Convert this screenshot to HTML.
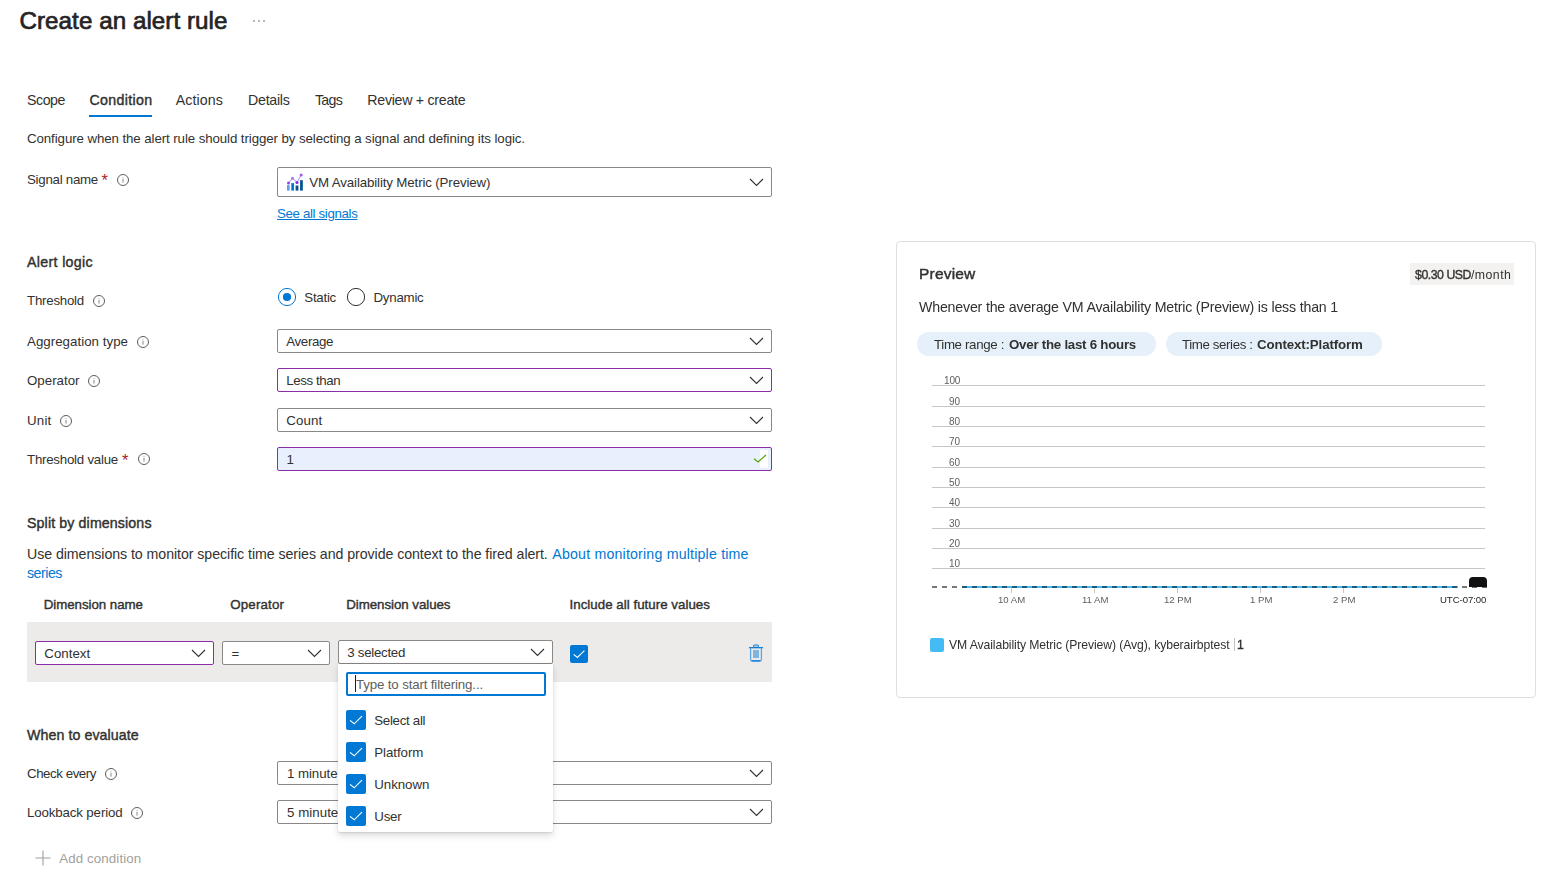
<!DOCTYPE html>
<html><head><meta charset="utf-8"><style>
html,body{margin:0;padding:0;background:#fff;width:1560px;height:887px;overflow:hidden;}
body{position:relative;font-family:"Liberation Sans",sans-serif;}
</style></head><body>
<div style="position:absolute;left:19.50px;top:11.00px;line-height:20px;font-size:24.2px;font-weight:400;color:#242424;letter-spacing:0.048px;white-space:nowrap;-webkit-text-stroke:0.70px #242424;">Create an alert rule</div>
<svg style="position:absolute;left:252px;top:19px" width="14" height="4" viewBox="0 0 14 4"><circle cx="2" cy="2" r="0.8" fill="#605e5c"/><circle cx="7" cy="2" r="0.8" fill="#605e5c"/><circle cx="12" cy="2" r="0.8" fill="#605e5c"/></svg>
<div style="position:absolute;left:27.00px;top:90.00px;line-height:20px;font-size:14.2px;font-weight:400;color:#323130;letter-spacing:-0.447px;white-space:nowrap;">Scope</div>
<div style="position:absolute;left:89.50px;top:90.00px;line-height:20px;font-size:14.2px;font-weight:400;color:#323130;letter-spacing:0.339px;white-space:nowrap;-webkit-text-stroke:0.41px #323130;">Condition</div>
<div style="position:absolute;left:175.80px;top:90.00px;line-height:20px;font-size:14.2px;font-weight:400;color:#323130;letter-spacing:0.067px;white-space:nowrap;">Actions</div>
<div style="position:absolute;left:248.00px;top:90.00px;line-height:20px;font-size:14.2px;font-weight:400;color:#323130;letter-spacing:-0.254px;white-space:nowrap;">Details</div>
<div style="position:absolute;left:315.00px;top:90.00px;line-height:20px;font-size:14.2px;font-weight:400;color:#323130;letter-spacing:-0.742px;white-space:nowrap;">Tags</div>
<div style="position:absolute;left:367.30px;top:90.00px;line-height:20px;font-size:14.2px;font-weight:400;color:#323130;letter-spacing:-0.275px;white-space:nowrap;">Review + create</div>
<div style="position:absolute;left:89px;top:115px;width:63px;height:2px;background:#0078d4;"></div>
<div style="position:absolute;left:27.00px;top:129.00px;line-height:20px;font-size:13.3px;font-weight:400;color:#323130;letter-spacing:-0.093px;white-space:nowrap;">Configure when the alert rule should trigger by selecting a signal and defining its logic.</div>
<div style="position:absolute;left:27.00px;top:170.00px;line-height:20px;font-size:13.3px;font-weight:400;color:#323130;letter-spacing:-0.266px;white-space:nowrap;">Signal name</div>
<div style="position:absolute;left:101.50px;top:170.00px;line-height:20px;font-size:16.5px;font-weight:400;color:#a4262c;letter-spacing:0.000px;white-space:nowrap;">*</div>
<svg style="position:absolute;left:116px;top:173px" width="14" height="14" viewBox="0 0 14 14"><circle cx="7" cy="7" r="5.5" fill="none" stroke="#605e5c" stroke-width="1"/><rect x="6.5" y="6" width="1" height="3.6" fill="#8a8886"/><rect x="6.5" y="4.2" width="1" height="1" fill="#a19f9d"/></svg>
<div style="position:absolute;left:277px;top:167px;width:495px;height:30px;box-sizing:border-box;border:1px solid #8a8886;background:#fff;border-radius:2px;"></div>
<svg style="position:absolute;left:286px;top:172px" width="18" height="20" viewBox="0 0 18 20">
<rect x="1" y="13.1" width="2.7" height="5.5" fill="#5ea0ef"/>
<rect x="5.3" y="11.1" width="2.7" height="7.5" fill="#0078d4"/>
<rect x="9.6" y="13.5" width="2.8" height="5.1" fill="#0a4f96"/>
<rect x="14.1" y="8.2" width="2.7" height="10.4" fill="#004e8c"/>
<polyline points="2.5,11.1 6.5,6.2 11,10.4 15.2,2.9" fill="none" stroke="#a67af4" stroke-width="0.9"/>
<circle cx="2.5" cy="11.1" r="1.5" fill="#8c46e6"/><circle cx="6.5" cy="6.2" r="1.5" fill="#a67af4"/>
<circle cx="11" cy="10.4" r="1.5" fill="#7b2fe0"/><circle cx="15.2" cy="2.9" r="1.5" fill="#9a5cf0"/>
</svg>
<div style="position:absolute;left:309.30px;top:173.00px;line-height:20px;font-size:13.3px;font-weight:400;color:#323130;letter-spacing:-0.132px;white-space:nowrap;">VM Availability Metric (Preview)</div>
<svg style="position:absolute;left:749.0px;top:178.05px" width="15" height="8.5" viewBox="0 0 15 8.5"><path d="M1 1 L7.5 7.5 L14 1" fill="none" stroke="#323130" stroke-width="1.1"/></svg>
<div style="position:absolute;left:277.00px;top:204.00px;line-height:20px;font-size:13.3px;font-weight:400;color:#0078d4;letter-spacing:-0.350px;white-space:nowrap;text-decoration:underline;text-underline-offset:1px;">See all signals</div>
<div style="position:absolute;left:27.00px;top:252.00px;line-height:20px;font-size:14.2px;font-weight:400;color:#323130;letter-spacing:0.337px;white-space:nowrap;-webkit-text-stroke:0.41px #323130;">Alert logic</div>
<div style="position:absolute;left:27.00px;top:291.00px;line-height:20px;font-size:13.3px;font-weight:400;color:#323130;letter-spacing:-0.238px;white-space:nowrap;">Threshold</div>
<svg style="position:absolute;left:92px;top:293.8px" width="14" height="14" viewBox="0 0 14 14"><circle cx="7" cy="7" r="5.5" fill="none" stroke="#605e5c" stroke-width="1"/><rect x="6.5" y="6" width="1" height="3.6" fill="#8a8886"/><rect x="6.5" y="4.2" width="1" height="1" fill="#a19f9d"/></svg>
<svg style="position:absolute;left:277px;top:287px" width="20" height="20" viewBox="0 0 20 20"><circle cx="10" cy="10" r="8.6" fill="#fff" stroke="#0078d4" stroke-width="1"/><circle cx="10" cy="10" r="4.1" fill="#0078d4"/></svg>
<div style="position:absolute;left:304.30px;top:288.00px;line-height:20px;font-size:13.3px;font-weight:400;color:#323130;letter-spacing:-0.261px;white-space:nowrap;">Static</div>
<svg style="position:absolute;left:346px;top:287px" width="20" height="20" viewBox="0 0 20 20"><circle cx="10" cy="10" r="8.6" fill="#fff" stroke="#323130" stroke-width="1"/></svg>
<div style="position:absolute;left:373.50px;top:288.00px;line-height:20px;font-size:13.3px;font-weight:400;color:#323130;letter-spacing:-0.248px;white-space:nowrap;">Dynamic</div>
<div style="position:absolute;left:27.00px;top:332.00px;line-height:20px;font-size:13.3px;font-weight:400;color:#323130;letter-spacing:0.028px;white-space:nowrap;">Aggregation type</div>
<svg style="position:absolute;left:136px;top:334.7px" width="14" height="14" viewBox="0 0 14 14"><circle cx="7" cy="7" r="5.5" fill="none" stroke="#605e5c" stroke-width="1"/><rect x="6.5" y="6" width="1" height="3.6" fill="#8a8886"/><rect x="6.5" y="4.2" width="1" height="1" fill="#a19f9d"/></svg>
<div style="position:absolute;left:277px;top:329px;width:495px;height:24px;box-sizing:border-box;border:1px solid #8a8886;background:#fff;border-radius:2px;"></div>
<div style="position:absolute;left:286.20px;top:332.00px;line-height:20px;font-size:13.3px;font-weight:400;color:#323130;letter-spacing:-0.328px;white-space:nowrap;">Average</div>
<svg style="position:absolute;left:749.0px;top:336.55px" width="15" height="8.5" viewBox="0 0 15 8.5"><path d="M1 1 L7.5 7.5 L14 1" fill="none" stroke="#323130" stroke-width="1.1"/></svg>
<div style="position:absolute;left:27.00px;top:371.00px;line-height:20px;font-size:13.3px;font-weight:400;color:#323130;letter-spacing:0.002px;white-space:nowrap;">Operator</div>
<svg style="position:absolute;left:87px;top:373.7px" width="14" height="14" viewBox="0 0 14 14"><circle cx="7" cy="7" r="5.5" fill="none" stroke="#605e5c" stroke-width="1"/><rect x="6.5" y="6" width="1" height="3.6" fill="#8a8886"/><rect x="6.5" y="4.2" width="1" height="1" fill="#a19f9d"/></svg>
<div style="position:absolute;left:277px;top:368px;width:495px;height:24px;box-sizing:border-box;border:1px solid #8a2da8;background:#fff;border-radius:2px;"></div>
<div style="position:absolute;left:286.20px;top:371.00px;line-height:20px;font-size:13.3px;font-weight:400;color:#323130;letter-spacing:-0.408px;white-space:nowrap;">Less than</div>
<svg style="position:absolute;left:749.0px;top:375.55px" width="15" height="8.5" viewBox="0 0 15 8.5"><path d="M1 1 L7.5 7.5 L14 1" fill="none" stroke="#323130" stroke-width="1.1"/></svg>
<div style="position:absolute;left:27.00px;top:411.00px;line-height:20px;font-size:13.3px;font-weight:400;color:#323130;letter-spacing:0.211px;white-space:nowrap;">Unit</div>
<svg style="position:absolute;left:59px;top:413.7px" width="14" height="14" viewBox="0 0 14 14"><circle cx="7" cy="7" r="5.5" fill="none" stroke="#605e5c" stroke-width="1"/><rect x="6.5" y="6" width="1" height="3.6" fill="#8a8886"/><rect x="6.5" y="4.2" width="1" height="1" fill="#a19f9d"/></svg>
<div style="position:absolute;left:277px;top:408px;width:495px;height:24px;box-sizing:border-box;border:1px solid #8a8886;background:#fff;border-radius:2px;"></div>
<div style="position:absolute;left:286.20px;top:411.00px;line-height:20px;font-size:13.3px;font-weight:400;color:#323130;letter-spacing:0.103px;white-space:nowrap;">Count</div>
<svg style="position:absolute;left:749.0px;top:415.55px" width="15" height="8.5" viewBox="0 0 15 8.5"><path d="M1 1 L7.5 7.5 L14 1" fill="none" stroke="#323130" stroke-width="1.1"/></svg>
<div style="position:absolute;left:27.00px;top:450.00px;line-height:20px;font-size:13.3px;font-weight:400;color:#323130;letter-spacing:-0.242px;white-space:nowrap;">Threshold value</div>
<div style="position:absolute;left:122.00px;top:450.00px;line-height:20px;font-size:16.5px;font-weight:400;color:#a4262c;letter-spacing:0.000px;white-space:nowrap;">*</div>
<svg style="position:absolute;left:137px;top:452px" width="14" height="14" viewBox="0 0 14 14"><circle cx="7" cy="7" r="5.5" fill="none" stroke="#605e5c" stroke-width="1"/><rect x="6.5" y="6" width="1" height="3.6" fill="#8a8886"/><rect x="6.5" y="4.2" width="1" height="1" fill="#a19f9d"/></svg>
<div style="position:absolute;left:277px;top:447px;width:495px;height:24px;box-sizing:border-box;border:1px solid #8a2da8;background:#e8f0fe;border-radius:2px;"></div>
<div style="position:absolute;left:760px;top:450px;width:8px;height:18px;background:#fff;"></div>
<svg style="position:absolute;left:753px;top:454px" width="14" height="10" viewBox="0 0 14 10"><path d="M1 4.8 L5 8 L13 1" fill="none" stroke="#57a300" stroke-width="1.2"/></svg>
<div style="position:absolute;left:286.50px;top:450.00px;line-height:20px;font-size:13.3px;font-weight:400;color:#323130;letter-spacing:0.000px;white-space:nowrap;">1</div>
<div style="position:absolute;left:27.00px;top:513.00px;line-height:20px;font-size:14.2px;font-weight:400;color:#323130;letter-spacing:0.125px;white-space:nowrap;-webkit-text-stroke:0.41px #323130;">Split by dimensions</div>
<div style="position:absolute;left:27.00px;top:544.00px;line-height:20px;font-size:14.2px;font-weight:400;color:#323130;letter-spacing:-0.061px;white-space:nowrap;">Use dimensions to monitor specific time series and provide context to the fired alert.</div>
<div style="position:absolute;left:552.30px;top:544.00px;line-height:20px;font-size:14.2px;font-weight:400;color:#0078d4;letter-spacing:0.185px;white-space:nowrap;">About monitoring multiple time</div>
<div style="position:absolute;left:27.00px;top:563.00px;line-height:20px;font-size:14.2px;font-weight:400;color:#0078d4;letter-spacing:-0.477px;white-space:nowrap;">series</div>
<div style="position:absolute;left:43.70px;top:595.00px;line-height:20px;font-size:13.3px;font-weight:400;color:#323130;letter-spacing:-0.034px;white-space:nowrap;-webkit-text-stroke:0.39px #323130;">Dimension name</div>
<div style="position:absolute;left:230.20px;top:595.00px;line-height:20px;font-size:13.3px;font-weight:400;color:#323130;letter-spacing:0.189px;white-space:nowrap;-webkit-text-stroke:0.39px #323130;">Operator</div>
<div style="position:absolute;left:346.20px;top:595.00px;line-height:20px;font-size:13.3px;font-weight:400;color:#323130;letter-spacing:-0.041px;white-space:nowrap;-webkit-text-stroke:0.39px #323130;">Dimension values</div>
<div style="position:absolute;left:569.50px;top:595.00px;line-height:20px;font-size:13.3px;font-weight:400;color:#323130;letter-spacing:0.028px;white-space:nowrap;-webkit-text-stroke:0.39px #323130;">Include all future values</div>
<div style="position:absolute;left:27px;top:622px;width:745px;height:60px;background:#edebe9;"></div>
<div style="position:absolute;left:35px;top:641px;width:179px;height:24px;box-sizing:border-box;border:1px solid #8a2da8;background:#fff;border-radius:2px;"></div>
<div style="position:absolute;left:44.30px;top:644.00px;line-height:20px;font-size:13.3px;font-weight:400;color:#323130;letter-spacing:0.000px;white-space:nowrap;">Context</div>
<svg style="position:absolute;left:191.0px;top:649.25px" width="15" height="8.5" viewBox="0 0 15 8.5"><path d="M1 1 L7.5 7.5 L14 1" fill="none" stroke="#323130" stroke-width="1.1"/></svg>
<div style="position:absolute;left:222px;top:641px;width:108px;height:24px;box-sizing:border-box;border:1px solid #8a8886;background:#fff;border-radius:2px;"></div>
<div style="position:absolute;left:231.50px;top:644.00px;line-height:20px;font-size:13.3px;font-weight:400;color:#323130;letter-spacing:0.000px;white-space:nowrap;">=</div>
<svg style="position:absolute;left:307.0px;top:649.25px" width="15" height="8.5" viewBox="0 0 15 8.5"><path d="M1 1 L7.5 7.5 L14 1" fill="none" stroke="#323130" stroke-width="1.1"/></svg>
<div style="position:absolute;left:338px;top:640px;width:215px;height:24px;box-sizing:border-box;border:1px solid #8a8886;background:#fff;border-radius:2px;"></div>
<div style="position:absolute;left:347.30px;top:643.00px;line-height:20px;font-size:13.3px;font-weight:400;color:#323130;letter-spacing:-0.292px;white-space:nowrap;">3 selected</div>
<svg style="position:absolute;left:530.0px;top:648.25px" width="15" height="8.5" viewBox="0 0 15 8.5"><path d="M1 1 L7.5 7.5 L14 1" fill="none" stroke="#323130" stroke-width="1.1"/></svg>
<svg style="position:absolute;left:570px;top:645px" width="18" height="18" viewBox="0 0 18 18"><rect x="0" y="0" width="18" height="18" rx="2" fill="#0078d4"/><path d="M3.6 9.36 L7.38 12.419999999999998 L14.4 5.58" fill="none" stroke="#fff" stroke-width="1.1"/></svg>
<svg style="position:absolute;left:748px;top:643px" width="16" height="20" viewBox="0 0 16 20">
<rect x="5.5" y="2" width="5" height="2.2" rx="1" fill="none" stroke="#0078d4" stroke-width="1"/>
<rect x="1" y="4.1" width="14" height="1.2" fill="#0078d4"/>
<path d="M2.6 5 V16.5 Q2.6 18 4 18 H12 Q13.4 18 13.4 16.5 V5" fill="none" stroke="#5ea6e6" stroke-width="1.3"/><rect x="3.5" y="17.3" width="9" height="1.1" fill="#0078d4"/>
<rect x="5" y="7" width="6" height="8" fill="#7fb4e3"/>
</svg>
<div style="position:absolute;left:27.00px;top:725.00px;line-height:20px;font-size:14.2px;font-weight:400;color:#323130;letter-spacing:0.080px;white-space:nowrap;-webkit-text-stroke:0.41px #323130;">When to evaluate</div>
<div style="position:absolute;left:27.00px;top:764.00px;line-height:20px;font-size:13.3px;font-weight:400;color:#323130;letter-spacing:-0.446px;white-space:nowrap;">Check every</div>
<svg style="position:absolute;left:104px;top:766.8px" width="14" height="14" viewBox="0 0 14 14"><circle cx="7" cy="7" r="5.5" fill="none" stroke="#605e5c" stroke-width="1"/><rect x="6.5" y="6" width="1" height="3.6" fill="#8a8886"/><rect x="6.5" y="4.2" width="1" height="1" fill="#a19f9d"/></svg>
<div style="position:absolute;left:277px;top:761px;width:495px;height:24px;box-sizing:border-box;border:1px solid #8a8886;background:#fff;border-radius:2px;"></div>
<div style="position:absolute;left:287.00px;top:764.00px;line-height:20px;font-size:13.3px;font-weight:400;color:#323130;letter-spacing:-0.062px;white-space:nowrap;">1 minute</div>
<svg style="position:absolute;left:749.0px;top:768.75px" width="15" height="8.5" viewBox="0 0 15 8.5"><path d="M1 1 L7.5 7.5 L14 1" fill="none" stroke="#323130" stroke-width="1.1"/></svg>
<div style="position:absolute;left:27.00px;top:803.00px;line-height:20px;font-size:13.3px;font-weight:400;color:#323130;letter-spacing:-0.139px;white-space:nowrap;">Lookback period</div>
<svg style="position:absolute;left:130px;top:805.8px" width="14" height="14" viewBox="0 0 14 14"><circle cx="7" cy="7" r="5.5" fill="none" stroke="#605e5c" stroke-width="1"/><rect x="6.5" y="6" width="1" height="3.6" fill="#8a8886"/><rect x="6.5" y="4.2" width="1" height="1" fill="#a19f9d"/></svg>
<div style="position:absolute;left:277px;top:800px;width:495px;height:24px;box-sizing:border-box;border:1px solid #8a8886;background:#fff;border-radius:2px;"></div>
<div style="position:absolute;left:287.00px;top:803.00px;line-height:20px;font-size:13.3px;font-weight:400;color:#323130;letter-spacing:0.038px;white-space:nowrap;">5 minutes</div>
<svg style="position:absolute;left:749.0px;top:807.75px" width="15" height="8.5" viewBox="0 0 15 8.5"><path d="M1 1 L7.5 7.5 L14 1" fill="none" stroke="#323130" stroke-width="1.1"/></svg>
<svg style="position:absolute;left:35px;top:850px" width="16" height="16" viewBox="0 0 16 16"><path d="M8 0.5 V15.5 M0.5 8 H15.5" stroke="#a19f9d" stroke-width="1.1"/></svg>
<div style="position:absolute;left:59.30px;top:849.00px;line-height:20px;font-size:13.3px;font-weight:400;color:#a19f9d;letter-spacing:0.108px;white-space:nowrap;">Add condition</div>
<div style="position:absolute;left:338px;top:664px;width:215px;height:168px;background:#fff;box-shadow:0 3.2px 7.2px rgba(0,0,0,0.13),0 0.6px 1.8px rgba(0,0,0,0.11);border-radius:0 0 2px 2px"></div>
<div style="position:absolute;left:346px;top:672px;width:200px;height:24px;box-sizing:border-box;border:2px solid #0078d4;background:#fff;border-radius:2px;"></div>
<div style="position:absolute;left:355px;top:675px;width:1px;height:17px;background:#201f1e;"></div>
<div style="position:absolute;left:356.00px;top:675.00px;line-height:20px;font-size:13.3px;font-weight:400;color:#605e5c;letter-spacing:-0.147px;white-space:nowrap;">Type to start filtering...</div>
<svg style="position:absolute;left:346px;top:710px" width="20" height="20" viewBox="0 0 20 20"><rect x="0" y="0" width="20" height="20" rx="2" fill="#0078d4"/><path d="M4.0 10.4 L8.2 13.799999999999999 L16.0 6.2" fill="none" stroke="#fff" stroke-width="1.1"/></svg>
<div style="position:absolute;left:374.30px;top:711.00px;line-height:20px;font-size:13.3px;font-weight:400;color:#323130;letter-spacing:-0.297px;white-space:nowrap;">Select all</div>
<svg style="position:absolute;left:346px;top:742px" width="20" height="20" viewBox="0 0 20 20"><rect x="0" y="0" width="20" height="20" rx="2" fill="#0078d4"/><path d="M4.0 10.4 L8.2 13.799999999999999 L16.0 6.2" fill="none" stroke="#fff" stroke-width="1.1"/></svg>
<div style="position:absolute;left:374.30px;top:743.00px;line-height:20px;font-size:13.3px;font-weight:400;color:#323130;letter-spacing:-0.064px;white-space:nowrap;">Platform</div>
<svg style="position:absolute;left:346px;top:774px" width="20" height="20" viewBox="0 0 20 20"><rect x="0" y="0" width="20" height="20" rx="2" fill="#0078d4"/><path d="M4.0 10.4 L8.2 13.799999999999999 L16.0 6.2" fill="none" stroke="#fff" stroke-width="1.1"/></svg>
<div style="position:absolute;left:374.30px;top:775.00px;line-height:20px;font-size:13.3px;font-weight:400;color:#323130;letter-spacing:-0.062px;white-space:nowrap;">Unknown</div>
<svg style="position:absolute;left:346px;top:806px" width="20" height="20" viewBox="0 0 20 20"><rect x="0" y="0" width="20" height="20" rx="2" fill="#0078d4"/><path d="M4.0 10.4 L8.2 13.799999999999999 L16.0 6.2" fill="none" stroke="#fff" stroke-width="1.1"/></svg>
<div style="position:absolute;left:374.30px;top:807.00px;line-height:20px;font-size:13.3px;font-weight:400;color:#323130;letter-spacing:-0.270px;white-space:nowrap;">User</div>
<div style="position:absolute;left:896px;top:241px;width:640px;height:457px;box-sizing:border-box;border:1px solid #e1dfdd;background:transparent;border-radius:4px;"></div>
<div style="position:absolute;left:919.30px;top:264.00px;line-height:20px;font-size:15.5px;font-weight:400;color:#323130;letter-spacing:0.194px;white-space:nowrap;-webkit-text-stroke:0.45px #323130;will-change:transform;">Preview</div>
<div style="position:absolute;left:1410px;top:263px;width:104px;height:22px;background:#f3f2f1;"></div>
<div style="position:absolute;left:1415.00px;top:265.00px;line-height:20px;font-size:12.3px;font-weight:400;color:#323130;letter-spacing:-0.462px;white-space:nowrap;-webkit-text-stroke:0.36px #323130;will-change:transform;">$0.30 USD</div>
<div style="position:absolute;left:1471.00px;top:265.00px;line-height:20px;font-size:12.3px;font-weight:400;color:#323130;letter-spacing:0.451px;white-space:nowrap;will-change:transform;">/month</div>
<div style="position:absolute;left:918.80px;top:297.00px;line-height:20px;font-size:14.2px;font-weight:400;color:#323130;letter-spacing:-0.189px;white-space:nowrap;will-change:transform;">Whenever the average VM Availability Metric (Preview) is less than 1</div>
<div style="position:absolute;left:917px;top:332px;width:239px;height:24px;border-radius:12px;background:#e5f0fa"></div>
<div style="position:absolute;left:1166px;top:332px;width:216px;height:24px;border-radius:12px;background:#e5f0fa"></div>
<div style="position:absolute;left:934.20px;top:335.00px;line-height:20px;font-size:13.3px;font-weight:400;color:#323130;letter-spacing:-0.346px;white-space:nowrap;will-change:transform;">Time range :</div>
<div style="position:absolute;left:1009.20px;top:335.00px;line-height:20px;font-size:13.3px;font-weight:700;color:#323130;letter-spacing:-0.251px;white-space:nowrap;will-change:transform;">Over the last 6 hours</div>
<div style="position:absolute;left:1182.40px;top:335.00px;line-height:20px;font-size:13.3px;font-weight:400;color:#323130;letter-spacing:-0.393px;white-space:nowrap;will-change:transform;">Time series :</div>
<div style="position:absolute;left:1256.50px;top:335.00px;line-height:20px;font-size:13.3px;font-weight:700;color:#323130;letter-spacing:-0.135px;white-space:nowrap;will-change:transform;">Context:Platform</div>
<div style="position:absolute;left:932px;top:385px;width:553px;height:1px;background:#c8c6c4;"></div>
<div style="position:absolute;left:943.80px;top:371.00px;line-height:20px;font-size:10px;font-weight:400;color:#605e5c;letter-spacing:-0.163px;white-space:nowrap;will-change:transform;">100</div>
<div style="position:absolute;left:932px;top:406px;width:553px;height:1px;background:#c8c6c4;"></div>
<div style="position:absolute;left:949.00px;top:392.00px;line-height:20px;font-size:10px;font-weight:400;color:#605e5c;letter-spacing:-0.062px;white-space:nowrap;will-change:transform;">90</div>
<div style="position:absolute;left:932px;top:426px;width:553px;height:1px;background:#c8c6c4;"></div>
<div style="position:absolute;left:949.00px;top:412.00px;line-height:20px;font-size:10px;font-weight:400;color:#605e5c;letter-spacing:-0.062px;white-space:nowrap;will-change:transform;">80</div>
<div style="position:absolute;left:932px;top:446px;width:553px;height:1px;background:#c8c6c4;"></div>
<div style="position:absolute;left:949.00px;top:432.00px;line-height:20px;font-size:10px;font-weight:400;color:#605e5c;letter-spacing:-0.062px;white-space:nowrap;will-change:transform;">70</div>
<div style="position:absolute;left:932px;top:467px;width:553px;height:1px;background:#c8c6c4;"></div>
<div style="position:absolute;left:949.00px;top:453.00px;line-height:20px;font-size:10px;font-weight:400;color:#605e5c;letter-spacing:-0.062px;white-space:nowrap;will-change:transform;">60</div>
<div style="position:absolute;left:932px;top:487px;width:553px;height:1px;background:#c8c6c4;"></div>
<div style="position:absolute;left:949.00px;top:473.00px;line-height:20px;font-size:10px;font-weight:400;color:#605e5c;letter-spacing:-0.062px;white-space:nowrap;will-change:transform;">50</div>
<div style="position:absolute;left:932px;top:507px;width:553px;height:1px;background:#c8c6c4;"></div>
<div style="position:absolute;left:949.00px;top:493.00px;line-height:20px;font-size:10px;font-weight:400;color:#605e5c;letter-spacing:-0.062px;white-space:nowrap;will-change:transform;">40</div>
<div style="position:absolute;left:932px;top:528px;width:553px;height:1px;background:#c8c6c4;"></div>
<div style="position:absolute;left:949.00px;top:514.00px;line-height:20px;font-size:10px;font-weight:400;color:#605e5c;letter-spacing:-0.062px;white-space:nowrap;will-change:transform;">30</div>
<div style="position:absolute;left:932px;top:548px;width:553px;height:1px;background:#c8c6c4;"></div>
<div style="position:absolute;left:949.00px;top:534.00px;line-height:20px;font-size:10px;font-weight:400;color:#605e5c;letter-spacing:-0.062px;white-space:nowrap;will-change:transform;">20</div>
<div style="position:absolute;left:932px;top:568px;width:553px;height:1px;background:#c8c6c4;"></div>
<div style="position:absolute;left:949.00px;top:554.00px;line-height:20px;font-size:10px;font-weight:400;color:#605e5c;letter-spacing:-0.062px;white-space:nowrap;will-change:transform;">10</div>
<svg style="position:absolute;left:930px;top:584px" width="560" height="6" viewBox="0 0 560 6"><line x1="2" y1="3" x2="28" y2="3" stroke="#797775" stroke-width="2" stroke-dasharray="5 5"/><line x1="32" y1="3" x2="528" y2="3" stroke="#45bbf5" stroke-width="2"/><line x1="32" y1="3" x2="528" y2="3" stroke="#1d5b7c" stroke-width="2" stroke-dasharray="5 5"/><line x1="532" y1="3" x2="537" y2="3" stroke="#797775" stroke-width="2"/></svg>
<div style="position:absolute;left:1469px;top:577px;width:18px;height:10px;background:#111;border-radius:4px 4px 0 0"></div>
<div style="position:absolute;left:1472px;top:587px;width:5px;height:1px;background:#6b6a69;"></div>
<div style="position:absolute;left:1482px;top:587px;width:5px;height:1px;background:#6b6a69;"></div>
<div style="position:absolute;left:1011px;top:588px;width:1px;height:5px;background:#c8c6c4;"></div>
<div style="position:absolute;left:998.40px;top:590.00px;line-height:20px;font-size:9.6px;font-weight:400;color:#605e5c;letter-spacing:0.000px;white-space:nowrap;will-change:transform;">10 AM</div>
<div style="position:absolute;left:1094px;top:588px;width:1px;height:5px;background:#c8c6c4;"></div>
<div style="position:absolute;left:1081.75px;top:590.00px;line-height:20px;font-size:9.6px;font-weight:400;color:#605e5c;letter-spacing:0.000px;white-space:nowrap;will-change:transform;">11 AM</div>
<div style="position:absolute;left:1177px;top:588px;width:1px;height:5px;background:#c8c6c4;"></div>
<div style="position:absolute;left:1164.23px;top:590.00px;line-height:20px;font-size:9.6px;font-weight:400;color:#605e5c;letter-spacing:0.000px;white-space:nowrap;will-change:transform;">12 PM</div>
<div style="position:absolute;left:1260px;top:588px;width:1px;height:5px;background:#c8c6c4;"></div>
<div style="position:absolute;left:1249.90px;top:590.00px;line-height:20px;font-size:9.6px;font-weight:400;color:#605e5c;letter-spacing:0.000px;white-space:nowrap;will-change:transform;">1 PM</div>
<div style="position:absolute;left:1343px;top:588px;width:1px;height:5px;background:#c8c6c4;"></div>
<div style="position:absolute;left:1332.90px;top:590.00px;line-height:20px;font-size:9.6px;font-weight:400;color:#605e5c;letter-spacing:0.000px;white-space:nowrap;will-change:transform;">2 PM</div>
<div style="position:absolute;left:1439.60px;top:590.00px;line-height:20px;font-size:9.6px;font-weight:400;color:#201f1e;letter-spacing:-0.058px;white-space:nowrap;will-change:transform;">UTC-07:00</div>
<div style="position:absolute;left:930px;top:638px;width:14px;height:14px;background:#45bbf5;border-radius:2px"></div>
<div style="position:absolute;left:949.00px;top:635.00px;line-height:20px;font-size:12.2px;font-weight:400;color:#323130;letter-spacing:-0.090px;white-space:nowrap;will-change:transform;">VM Availability Metric (Preview) (Avg), kyberairbptest</div>
<div style="position:absolute;left:1234px;top:638px;width:1px;height:13px;background:#c8c6c4;"></div>
<div style="position:absolute;left:1237.00px;top:635.00px;line-height:20px;font-size:12.2px;font-weight:400;color:#323130;letter-spacing:0.000px;white-space:nowrap;-webkit-text-stroke:0.35px #323130;will-change:transform;">1</div>
</body></html>
